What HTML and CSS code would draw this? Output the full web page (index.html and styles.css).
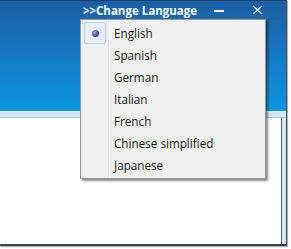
FILE: index.html
```html
<!DOCTYPE html>
<html lang="en">
<head>
  <meta charset="UTF-8" />
  <title>Change Language</title>
  <link rel="stylesheet" href="styles.css">
</head>
<body>

<div class="window">
  <div class="titlebar">
    <div class="title">&gt;&gt;Change Language</div>
    <div class="caption-btns">
      <div class="cap-btn min">
        <svg width="10" height="3" viewBox="0 0 10 3"><rect x="0" y="0" width="10" height="2" fill="#e8f2fb"/></svg>
      </div>
      <div class="cap-btn close">
        <svg width="11" height="10" viewBox="0 0 11 10"><path d="M1 1 L10 9 M10 1 L1 9" stroke="#e8f2fb" stroke-width="1.3" fill="none"/></svg>
      </div>
    </div>
  </div>
  <div class="frame-strip"></div>
  <div class="client"></div>

  <div class="menu">
    <div class="item checked"><span class="gutter"><span class="radio-box"><span class="dot"></span></span></span><span class="label">English</span></div>
    <div class="item"><span class="gutter"></span><span class="label">Spanish</span></div>
    <div class="item"><span class="gutter"></span><span class="label">German</span></div>
    <div class="item"><span class="gutter"></span><span class="label">Italian</span></div>
    <div class="item"><span class="gutter"></span><span class="label">French</span></div>
    <div class="item"><span class="gutter"></span><span class="label">Chinese simplified</span></div>
    <div class="item"><span class="gutter"></span><span class="label">Japanese</span></div>
  </div>
</div>

</body>
</html>
```

FILE: styles.css
```css
* {
  margin: 0; padding: 0; box-sizing: border-box;
}
body {
  background: #ffffff;
  font-family: 'Open Sans', 'Noto Sans', sans-serif;
  width: 291px;
  height: 249px;
  overflow: hidden;
}
.window {
  position: relative;
  width: 287px;
  height: 246px;
  display: flex;
  flex-direction: column;
  background: #d6e7f4;
  border-right: 1px solid #4a4f55;
  border-bottom: 2px solid #3e4348;
  box-shadow: 1px 1px 1px rgba(0,0,0,0.3);
}
.titlebar {
  height: 111px;
  background: linear-gradient(to bottom, #1b5fa4 0%, #1a6db6 30%, #1185d0 70%, #0a95e0 100%);
  border-top: 1px solid #1a3f6e;
  display: flex;
  justify-content: flex-end;
  align-items: flex-start;
}
.title {
  color: #ffffff;
  font-weight: 700;
  font-size: 11.5px;
  line-height: 19px;
  margin-right: 6px;
}
.caption-btns {
  display: flex;
  height: 19px;
  margin-right: 5px;
  border-left: 1px solid #2a5d92;
  border-right: 1px solid #2a5d92;
  border-bottom: 1px solid #2a5d92;
  border-radius: 0 0 4px 4px;
}
.cap-btn {
  display: flex;
  justify-content: center;
}
.cap-btn.min {
  width: 31px;
  border-right: 1px solid #2a5d92;
  align-items: center;
  padding-top: 3px;
}
.cap-btn.close {
  width: 45px;
  padding-top: 4px;
}
.frame-strip {
  height: 7px;
  background: #d3e6f4;
  border-bottom: 1px solid #a9c4d9;
}
.client {
  flex: 1;
  background: #ffffff;
  margin-right: 4px;
  border-right: 1px solid #4a6a85;
}
.menu {
  position: absolute;
  left: 80px;
  top: 19px;
  width: 186px;
  padding: 2px;
  background: #f0f0f0;
  border: 1px solid #979797;
  box-shadow: 2px 2px 2px rgba(0,0,0,0.45);
  display: flex;
  flex-direction: column;
  background-image: linear-gradient(to right, transparent 27px, #e2e3e3 27px, #e2e3e3 28px, #ffffff 28px, #ffffff 29px, transparent 29px);
}
.item {
  display: flex;
  align-items: center;
  height: 22px;
}
.gutter {
  width: 31px;
  height: 22px;
  display: flex;
  align-items: center;
}
.radio-box {
  width: 22px;
  height: 22px;
  border: 1px solid #b9cde0;
  border-radius: 2px;
  background: #e8eef6;
  display: flex;
  align-items: center;
  justify-content: center;
  margin-left: 1px;
}
.dot {
  width: 7px;
  height: 7px;
  border-radius: 50%;
  background: radial-gradient(circle at 35% 35%, #9a9ad8 0%, #4a4a98 60%, #2e2e6e 100%);
}
.label {
  font-size: 11.7px;
  color: #1a1a1a;
  line-height: 22px;
}
```
